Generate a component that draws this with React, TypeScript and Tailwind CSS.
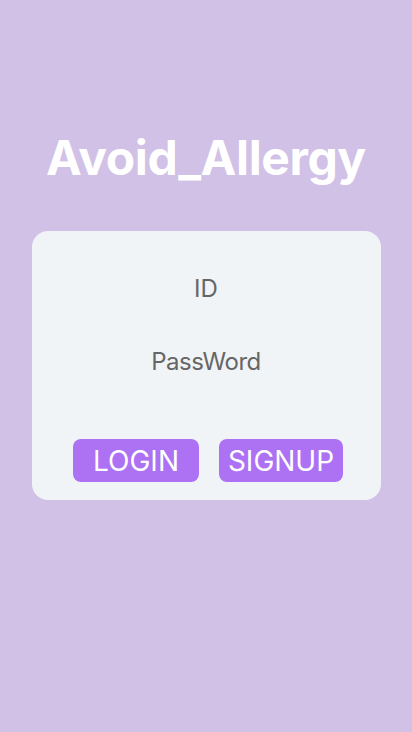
export default function App() {
  return (
    <div className="w-[412px] h-[732px] bg-[#d1c1e6] flex flex-col items-center font-['Inter',sans-serif]">
      <h1 className="mt-[128px] text-[48px] leading-[60px] font-bold text-white tracking-[-0.4px]">Avoid_Allergy</h1>
      <div className="mt-[43px] w-[349px] h-[269px] bg-[#f1f4f6] rounded-[16px] flex flex-col items-center">
        <div className="mt-[44px] text-[24px] leading-[28px] text-[#666]">ID</div>
        <div className="mt-[45px] text-[24px] leading-[28px] text-[#666] tracking-[-0.5px]">PassWord</div>
        <div className="mt-[63px] pl-[4px] flex gap-[20px]">
          <button className="w-[126px] h-[43px] rounded-[8px] bg-[#ad71f4] text-white text-[28px] leading-none">LOGIN</button>
          <button className="w-[124px] h-[43px] rounded-[8px] bg-[#ad71f4] text-white text-[28px] leading-none">SIGNUP</button>
        </div>
      </div>
    </div>
  )
}
